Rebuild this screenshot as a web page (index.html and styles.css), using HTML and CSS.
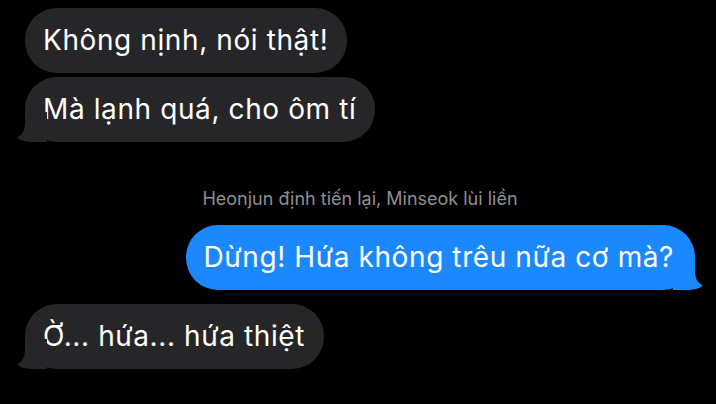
FILE: index.html
```html
<!DOCTYPE html>
<html lang="vi">
<head>
<meta charset="utf-8">
<link rel="stylesheet" href="styles.css">
</head>
<body>
<div class="chat">
  <div class="group in">
    <div class="bubble gray">Không nịnh, nói thật!</div>
    <div class="bubble gray">Mà lạnh quá, cho ôm tí<svg class="tail tail-left" viewBox="0 0 30 30" width="30" height="30"><path d="M8 0 H30 V30 H16 C11 30 5 29.6 0 25.6 C5 23 8 19 8 10 Z"/></svg></div>
  </div>
  <div class="note">Heonjun định tiến lại, Minseok lùi liền</div>
  <div class="group out">
    <div class="bubble blue">Dừng! Hứa không trêu nữa cơ mà?<svg class="tail tail-right" viewBox="0 0 30 30" width="30" height="30"><path d="M22 0 H0 V30 H14 C19 30 25 29.6 30 25.6 C25 23 22 19 22 10 Z"/></svg></div>
  </div>
  <div class="group in">
    <div class="bubble gray">Ờ... hứa... hứa thiệt<svg class="tail tail-left" viewBox="0 0 30 30" width="30" height="30"><path d="M8 0 H30 V30 H16 C11 30 5 29.6 0 25.6 C5 23 8 19 8 10 Z"/></svg></div>
  </div>
</div>
</body>
</html>
```
FILE: styles.css
```css
html, body {
  margin: 0;
  background: #000;
}
body {
  width: 716px;
  height: 404px;
  overflow: hidden;
  font-family: Inter, "Noto Sans", sans-serif;
}
.chat {
  display: flex;
  flex-direction: column;
  padding: 8px 21px 0 25px;
}
.group {
  display: flex;
  flex-direction: column;
  gap: 4px;
}
.group.in { align-items: flex-start; }
.group.out { align-items: flex-end; margin-top: 15px; }
.out + .in { margin-top: 14px; }
.bubble {
  position: relative;
  height: 65px;
  line-height: 65px;
  padding: 0 19px 0 18px;
  border-radius: 32px;
  font-size: 28px;
  letter-spacing: 0.6px;
  color: #fff;
  white-space: nowrap;
}
.gray { background: #262628; }
.gray .tail { fill: #262628; }
.blue { background: #1b89fd; padding-right: 21px; }
.blue .tail { fill: #1b89fd; }
.tail {
  position: absolute;
  bottom: 0;
  display: block;
}
.tail-left { left: -8px; }
.tail-right { right: -8px; }
.note {
  margin-top: 46px;
  align-self: center;
  font-size: 18px;
  line-height: 22px;
  color: #8e8e93;
}
```
